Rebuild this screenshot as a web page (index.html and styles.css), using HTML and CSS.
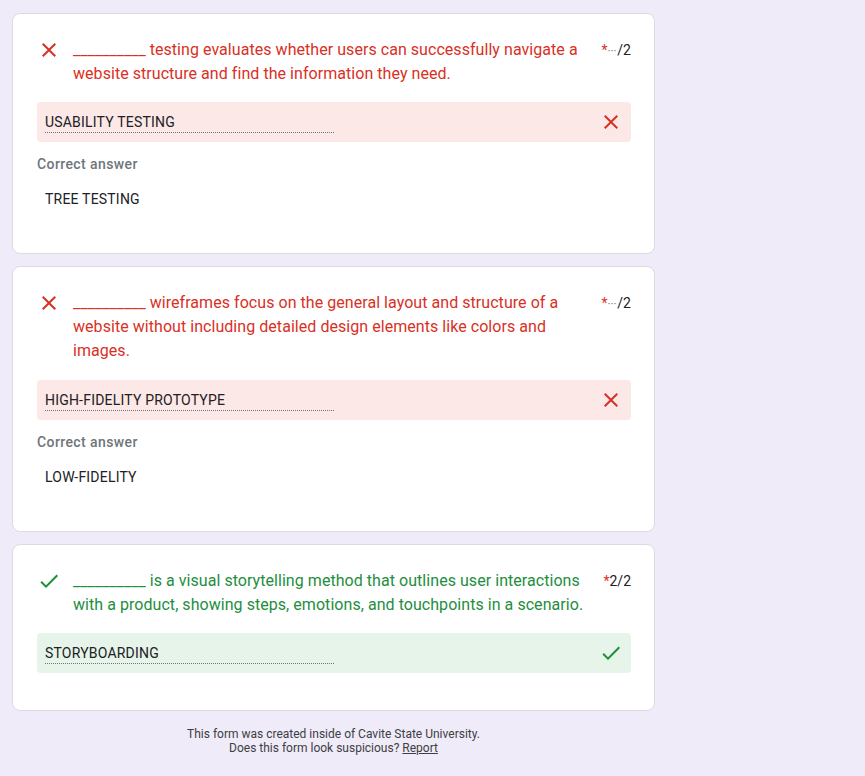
FILE: index.html
```html
<!DOCTYPE html>
<html>
<head>
<meta charset="utf-8">
<link rel="stylesheet" href="styles.css">
</head>
<body>
<main class="page">
  <section class="card">
    <div class="q-head">
      <svg class="q-icon wrong-c" viewBox="0 0 24 24"><path d="M19 6.41L17.59 5 12 10.59 6.41 5 5 6.41 10.59 12 5 17.59 6.41 19 12 13.41 17.59 19 19 17.59 13.41 12z"/></svg>
      <div class="q-text wrong-t">__________ testing evaluates whether users can successfully navigate a website structure and find the information they need.</div>
      <div class="points"><span class="req">*</span><span class="dots">···</span>/2</div>
    </div>
    <div class="answer wrong-bg">
      <span class="answer-text">USABILITY TESTING</span>
      <svg class="a-icon wrong-c" viewBox="0 0 24 24"><path d="M19 6.41L17.59 5 12 10.59 6.41 5 5 6.41 10.59 12 5 17.59 6.41 19 12 13.41 17.59 19 19 17.59 13.41 12z"/></svg>
    </div>
    <div class="correct">
      <div class="correct-label">Correct answer</div>
      <div class="correct-value">TREE TESTING</div>
    </div>
  </section>

  <section class="card">
    <div class="q-head">
      <svg class="q-icon wrong-c" viewBox="0 0 24 24"><path d="M19 6.41L17.59 5 12 10.59 6.41 5 5 6.41 10.59 12 5 17.59 6.41 19 12 13.41 17.59 19 19 17.59 13.41 12z"/></svg>
      <div class="q-text wrong-t">__________ wireframes focus on the general layout and structure of a website without including detailed design elements like colors and images.</div>
      <div class="points"><span class="req">*</span><span class="dots">···</span>/2</div>
    </div>
    <div class="answer wrong-bg answer-tall">
      <span class="answer-text">HIGH-FIDELITY PROTOTYPE</span>
      <svg class="a-icon wrong-c" viewBox="0 0 24 24"><path d="M19 6.41L17.59 5 12 10.59 6.41 5 5 6.41 10.59 12 5 17.59 6.41 19 12 13.41 17.59 19 19 17.59 13.41 12z"/></svg>
    </div>
    <div class="correct">
      <div class="correct-label">Correct answer</div>
      <div class="correct-value">LOW-FIDELITY</div>
    </div>
  </section>

  <section class="card card-right">
    <div class="q-head">
      <svg class="q-icon right-c" viewBox="0 0 24 24"><path d="M9 16.17L4.83 12l-1.42 1.41L9 19 21 7l-1.41-1.41z"/></svg>
      <div class="q-text right-t">__________ is a visual storytelling method that outlines user interactions with a product, showing steps, emotions, and touchpoints in a scenario.</div>
      <div class="points"><span class="req">*</span>2/2</div>
    </div>
    <div class="answer right-bg">
      <span class="answer-text">STORYBOARDING</span>
      <svg class="a-icon right-c" viewBox="0 0 24 24"><path d="M9 16.17L4.83 12l-1.42 1.41L9 19 21 7l-1.41-1.41z"/></svg>
    </div>
  </section>

  <footer class="footer">
    <div>This form was created inside of Cavite State University.</div>
    <div>Does this form look suspicious? <a class="report" href="#">Report</a></div>
  </footer>
</main>
</body>
</html>
```

FILE: styles.css
```css
html, body {
  margin: 0;
  padding: 0;
  background: #f0ebf8;
}
body {
  font-family: Roboto, "Liberation Sans", Arial, sans-serif;
  color: #202124;
}
.page {
  width: 643px;
  padding: 13px 12px 0;
  display: flex;
  flex-direction: column;
  gap: 12px;
}
.card {
  background: #fff;
  border: 1px solid #dadce0;
  border-radius: 8px;
  padding: 24px 23px 44px 24px;
}
.card-right {
  padding-bottom: 37px;
}
.q-head {
  display: flex;
  align-items: flex-start;
}
.q-icon {
  width: 24px;
  height: 24px;
  flex: none;
  margin-right: 12px;
}
.wrong-c { fill: #d93025; }
.right-c { fill: #1e8e3e; }
.q-text {
  flex: 1;
  font-size: 16px;
  line-height: 24px;
  letter-spacing: 0.05px;
}
.wrong-t { color: #d93025; }
.right-t { color: #1e8e3e; }
.points {
  flex: none;
  margin-left: 14px;
  font-size: 14px;
  line-height: 24px;
  color: #202124;
}
.req {
  color: #d93025;
}
.dots {
  color: #80868b;
  font-size: 12px;
  letter-spacing: -0.2px;
  margin-right: 1px;
}
.answer {
  margin-top: 16px;
  height: 40px;
  border-radius: 4px;
  display: flex;
  align-items: center;
  justify-content: space-between;
  padding: 0 8px;
}
.answer-tall {
  margin-top: 17px;
}
.wrong-bg { background: #fce8e6; }
.right-bg { background: #e6f4ea; }
.answer-text {
  width: 289px;
  font-size: 14px;
  line-height: 20px;
  letter-spacing: 0.2px;
  padding-top: 1px;
  border-bottom: 1px dotted #70757a;
}
.a-icon {
  width: 24px;
  height: 24px;
  flex: none;
}
.correct {
  margin-top: 12px;
}
.correct-label {
  font-family: Roboto, sans-serif;
  font-weight: 500;
  font-size: 14px;
  line-height: 20px;
  letter-spacing: 0.4px;
  color: #70757a;
}
.correct-value {
  padding: 15px 8px 0;
  font-size: 14px;
  line-height: 20px;
  letter-spacing: 0.2px;
}
.footer {
  margin-top: 4px;
  text-align: center;
  font-size: 12px;
  line-height: 14px;
  color: #3c4043;
}
.report {
  color: #3c4043;
  text-decoration: underline;
}
```
